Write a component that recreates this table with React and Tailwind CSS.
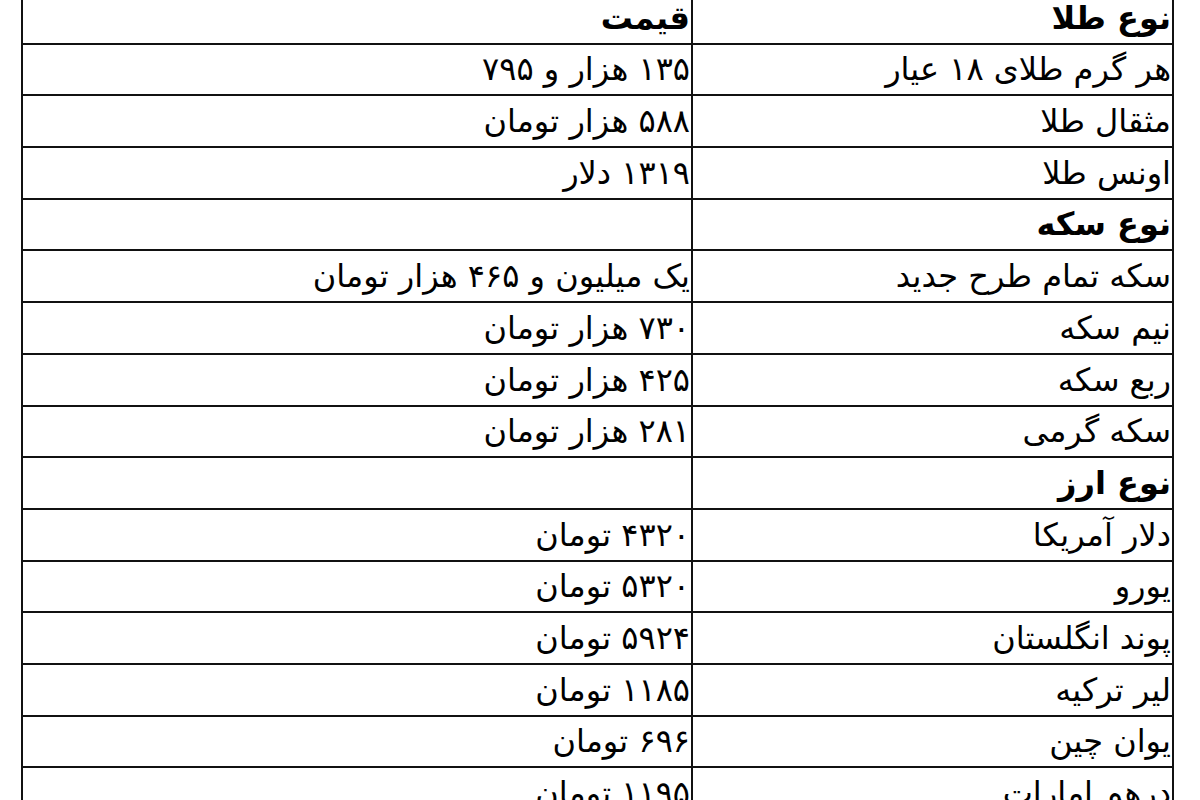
const ROWS = [
  { name: 'نوع طلا', price: 'قیمت', head: true },
  { name: 'هر گرم طلای ۱۸ عیار', price: '۱۳۵ هزار و ۷۹۵' },
  { name: 'مثقال طلا', price: '۵۸۸ هزار تومان' },
  { name: 'اونس طلا', price: '۱۳۱۹ دلار' },
  { name: 'نوع سکه', price: '', head: true },
  { name: 'سکه تمام طرح جدید', price: 'یک میلیون و ۴۶۵ هزار تومان' },
  { name: 'نیم سکه', price: '۷۳۰ هزار تومان' },
  { name: 'ربع سکه', price: '۴۲۵ هزار تومان' },
  { name: 'سکه گرمی', price: '۲۸۱ هزار تومان' },
  { name: 'نوع ارز', price: '', head: true },
  { name: 'دلار آمریکا', price: '۴۳۲۰ تومان' },
  { name: 'یورو', price: '۵۳۲۰ تومان' },
  { name: 'پوند انگلستان', price: '۵۹۲۴ تومان' },
  { name: 'لیر ترکیه', price: '۱۱۸۵ تومان' },
  { name: 'یوان چین', price: '۶۹۶ تومان' },
  { name: 'درهم امارات', price: '۱۱۹۵ تومان' },
];

export default function App() {
  return (
    <div className="w-[1200px] h-[800px] overflow-hidden bg-white">
      <div
        dir="rtl"
        className="mt-[-9px] ml-[21px] w-[1153px] border-x-2 border-t-2 border-[#111] text-black text-[32px] leading-none"
        style={{ fontFamily: 'Tahoma, "DejaVu Sans", sans-serif' }}
      >
        {ROWS.map((r, i) => (
          <div key={i} className="flex h-[51.7px] border-b-2 border-[#111]">
            <div
              className={`w-[481px] shrink-0 border-l-2 border-[#111] flex items-end pb-[9px] pr-[1px] whitespace-nowrap ${r.head ? 'font-bold' : ''}`}
            >
              {r.name}
            </div>
            <div className={`flex-1 flex items-end pb-[9px] pr-[1px] whitespace-nowrap ${i === 0 ? 'font-bold' : ''}`}>
              {r.price}
            </div>
          </div>
        ))}
      </div>
    </div>
  );
}
